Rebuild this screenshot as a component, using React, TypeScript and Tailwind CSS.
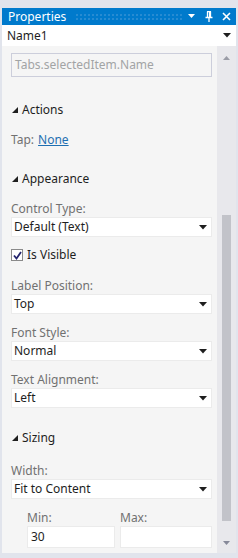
import type { FC, ReactNode } from 'react'

const FONT = { fontFamily: '"Noto Sans", "Open Sans", sans-serif' }

const Caret: FC<{ color?: string }> = ({ color = '#1e1e1e' }) => (
  <svg width="8" height="5" viewBox="0 0 8 5" className="shrink-0">
    <path d="M0 0H8L4 4.5Z" fill={color} />
  </svg>
)

const Expander = () => (
  <svg width="6" height="6" viewBox="0 0 6 6" className="shrink-0">
    <path d="M6 0V6H0Z" fill="#1e1e1e" />
  </svg>
)

const Section: FC<{ label: string; className?: string }> = ({ label, className = '' }) => (
  <div className={`flex items-center h-[16px] pl-[1px] gap-[4px] text-[12px] text-[#1e1e1e] ${className}`}>
    <Expander />
    <span>{label}</span>
  </div>
)

const Label: FC<{ children: ReactNode; className?: string }> = ({ children, className = '' }) => (
  <div className={`h-[16px] leading-[16px] text-[12px] text-[#717171] ${className}`}>{children}</div>
)

const Dropdown: FC<{ value: string }> = ({ value }) => (
  <div className="h-[20px] bg-white border border-[#ebebeb] flex items-center justify-between pl-[2px] pr-[4px] text-[12px] text-[#1e1e1e]">
    <span>{value}</span>
    <Caret />
  </div>
)

const Field: FC<{ label: string; value: string; className?: string }> = ({ label, value, className = '' }) => (
  <div className={className}>
    <Label>{label}</Label>
    <Dropdown value={value} />
  </div>
)

export default function App() {
  return (
    <div className="w-[238px] h-[558px] bg-[#e1e4ec] pt-[8px] px-[2px] pb-[5px] flex flex-col" style={FONT}>
      {/* Title bar */}
      <div className="h-[17px] bg-[#007acc] flex items-center pl-[6px] pr-[5px] text-white">
        <span className="text-[12px] leading-none">Properties</span>
        <div className="flex-1 h-[7px] ml-[9px] mr-[6px] bg-[radial-gradient(circle,#3c94d6_0.6px,transparent_0.9px)] bg-[length:4px_4px]" />
        <svg width="7" height="5" viewBox="0 0 7 5" className="mr-[10px]">
          <path d="M0 0H7L3.5 4Z" fill="white" />
        </svg>
        <svg width="8" height="11" viewBox="0 0 8 11" className="mr-[9px]">
          <path d="M2 0.5H6M2.5 0.5V6M5.5 0.5V6M0.5 6.5H7.5M4 6.5V11" stroke="white" strokeWidth="1.3" fill="none" />
          <path d="M4.5 1V6" stroke="white" strokeWidth="1.2" />
        </svg>
        <svg width="9" height="9" viewBox="0 0 9 9">
          <path d="M1 1L8 8M8 1L1 8" stroke="white" strokeWidth="1.6" />
        </svg>
      </div>

      {/* Object selector */}
      <div className="h-[21px] bg-white flex items-center justify-between pl-[5px] pr-[5px] text-[12px] text-[#1e1e1e]">
        <span>Name1</span>
        <Caret />
      </div>

      {/* Body */}
      <div className="flex-1 flex overflow-hidden">
        <div className="flex-1 bg-[#f5f5f5] pl-[9px] pr-[5px] pt-[7px] overflow-hidden">
          <div className="h-[24px] border border-[#cccedb] flex items-center pl-[3px] text-[12px] text-[#a2a4a5]">
            Tabs.selectedItem.Name
          </div>

          <Section label="Actions" className="mt-[25px]" />
          <div className="mt-[14px] h-[16px] flex items-center gap-[4px] text-[12px]">
            <span className="text-[#717171]">Tap:</span>
            <span className="text-[#1e6fb1] underline">None</span>
          </div>

          <Section label="Appearance" className="mt-[23px]" />
          <Field label="Control Type:" value="Default (Text)" className="mt-[14px]" />
          <div className="mt-[10px] h-[16px] flex items-center gap-[4px] text-[12px] text-[#1e1e1e]">
            <div className="w-[12px] h-[12px] border border-[#8a8a8a] bg-white flex items-center justify-center">
              <svg width="9" height="9" viewBox="0 0 9 9">
                <path d="M1 4.5L3.5 7.5L8 1" stroke="#24246e" strokeWidth="1.8" fill="none" />
              </svg>
            </div>
            <span>Is Visible</span>
          </div>
          <Field label="Label Position:" value="Top" className="mt-[15px]" />
          <Field label="Font Style:" value="Normal" className="mt-[11px]" />
          <Field label="Text Alignment:" value="Left" className="mt-[11px]" />

          <Section label="Sizing" className="mt-[22px]" />
          <Field label="Width:" value="Fit to Content" className="mt-[17px]" />
          <div className="mt-[11px] flex gap-[5px] pl-[16px]">
            <div className="w-[88px]">
              <Label>Min:</Label>
              <div className="h-[22px] bg-white border border-[#ebebeb] flex items-center pl-[3px] text-[12px] text-[#1e1e1e]">30</div>
            </div>
            <div className="flex-1">
              <Label>Max:</Label>
              <div className="h-[22px] bg-white border border-[#ebebeb]" />
            </div>
          </div>
        </div>

        {/* Scrollbar */}
        <div className="w-[19px] bg-[#e8e8ec] flex flex-col items-center pt-[10px] pb-[8px]">
          <svg width="7" height="4" viewBox="0 0 7 4"><path d="M0 4H7L3.5 0Z" fill="#9a9ca6" /></svg>
          <div className="flex-1 w-full flex flex-col items-center">
            <div className="w-[9px] mt-[155px] mb-[20px] flex-1 bg-[#c2c3c9]" />
          </div>
          <svg width="7" height="4" viewBox="0 0 7 4"><path d="M0 0H7L3.5 4Z" fill="#868999" /></svg>
        </div>
      </div>
    </div>
  )
}
